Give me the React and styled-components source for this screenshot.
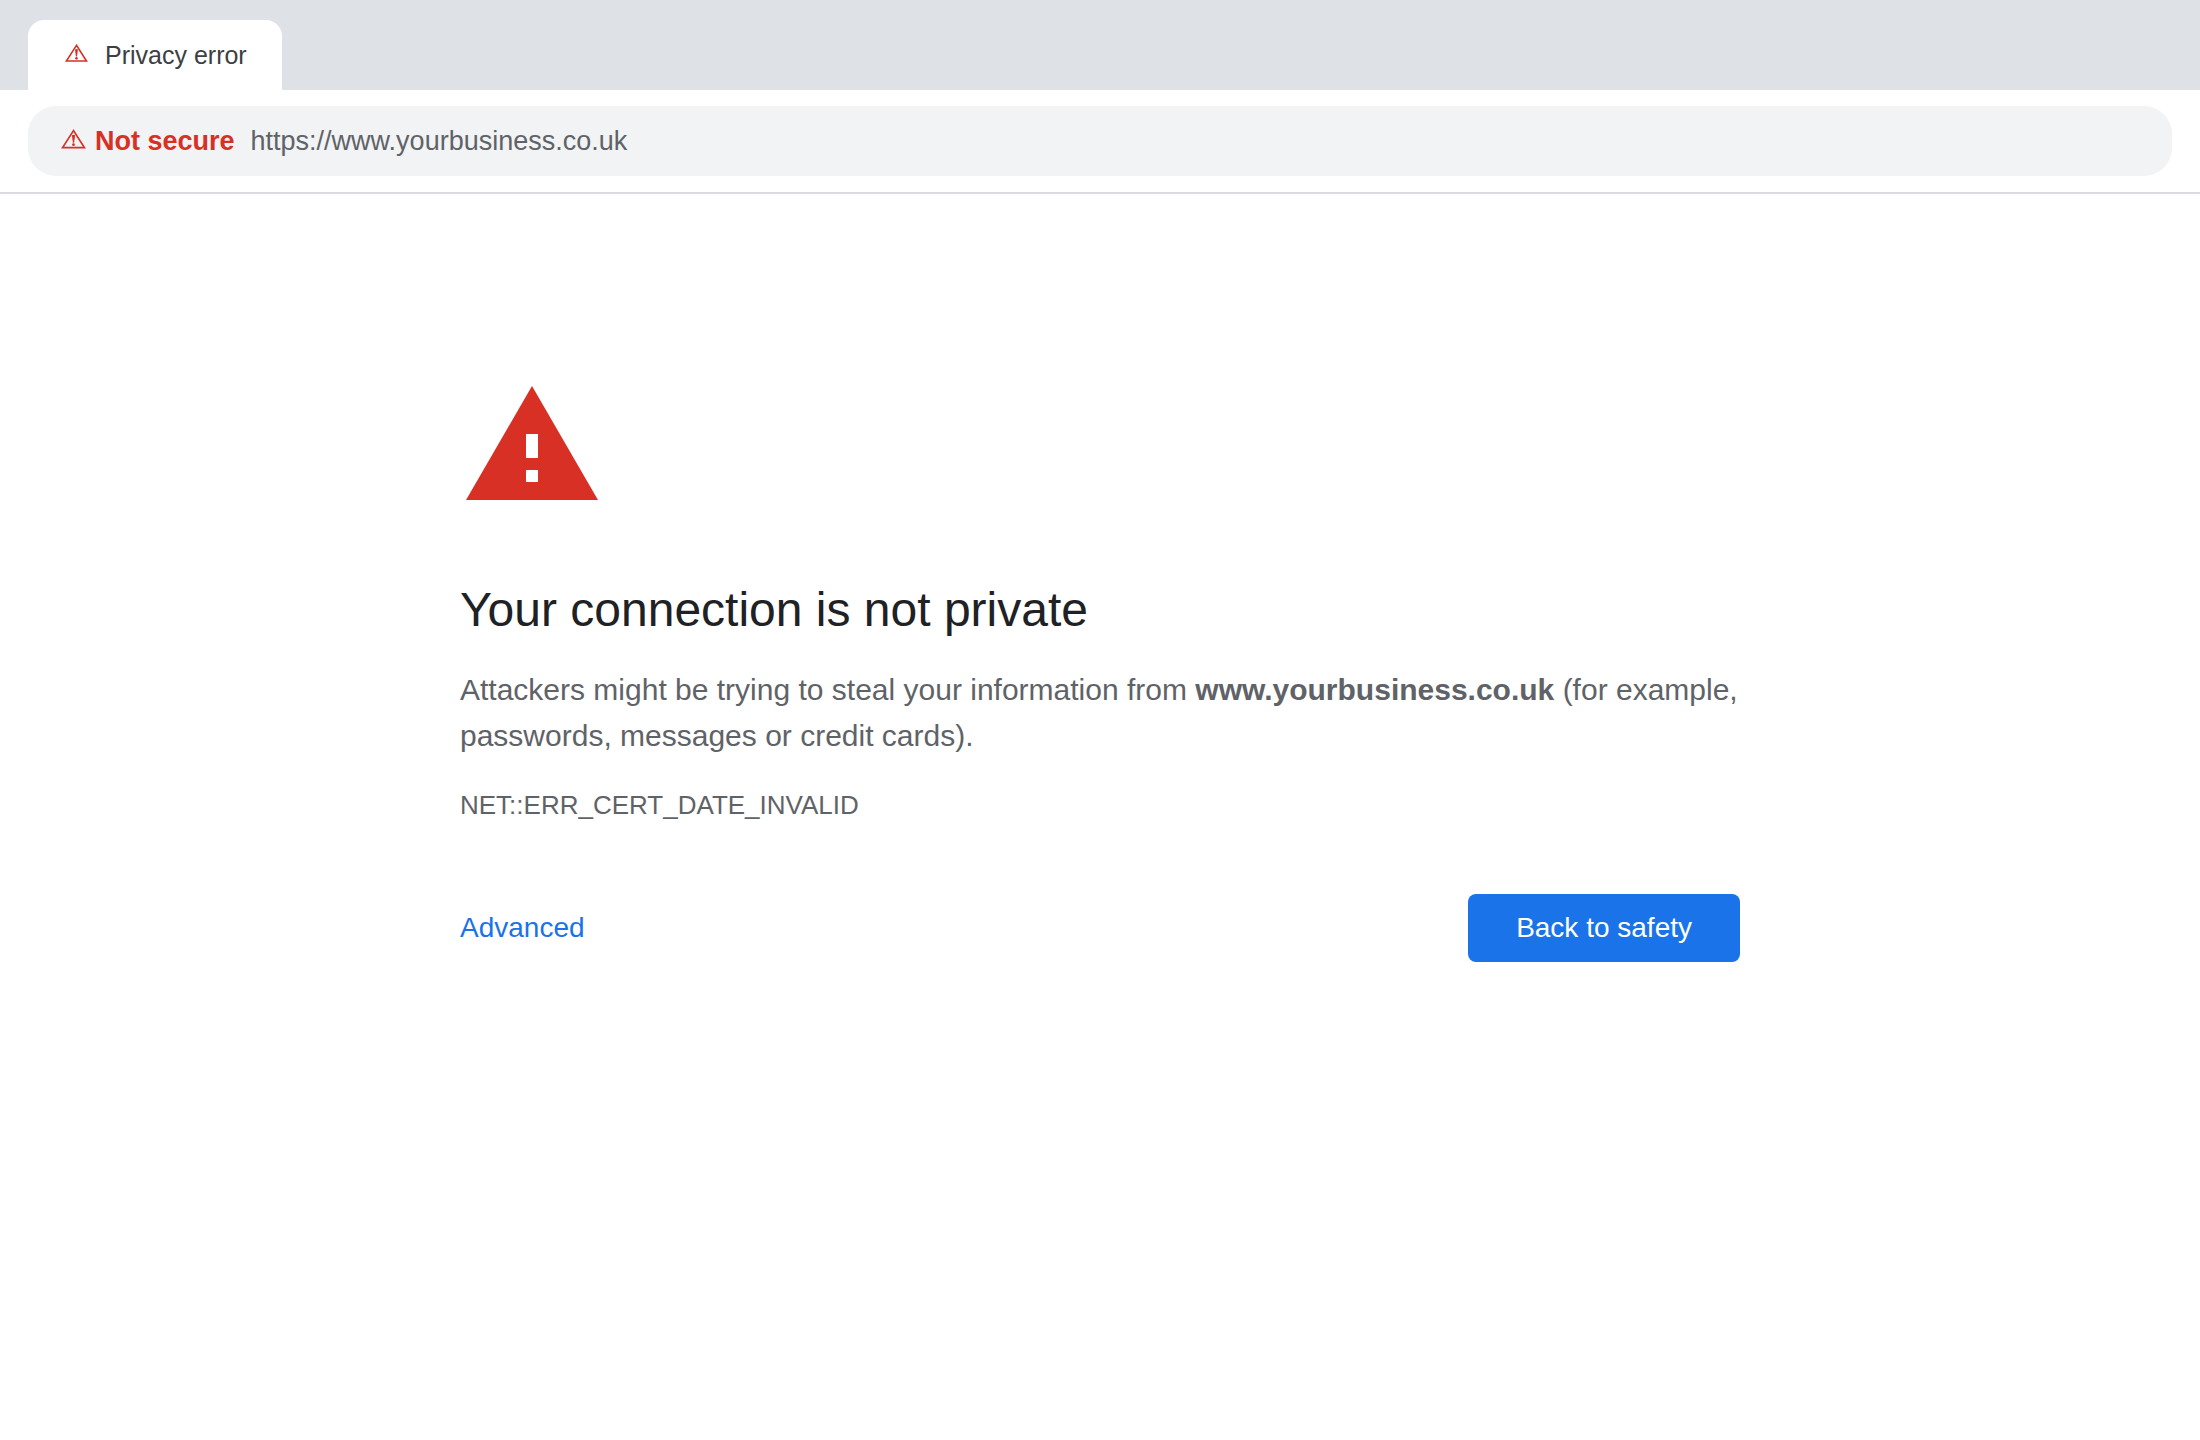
import React from "react";
import styled, { createGlobalStyle } from "styled-components";

const GlobalStyle = createGlobalStyle`
  body {
    margin: 0;
    background-color: #fff;
    font-family: "Liberation Sans", Arial, sans-serif;
  }
`

const TabStrip = styled.header`
  display: flex;
  align-items: flex-end;
  height: 90px;
  padding: 0 28px;
  box-sizing: border-box;
  background-color: #dee1e6;
`

const Tab = styled.div`
  display: flex;
  align-items: center;
  gap: 17px;
  height: 70px;
  padding: 0 35px 0 36px;
  border-radius: 16px 16px 0 0;
  background-color: #fff;
  color: #3c4043;
  font-size: 25px;
`

const Toolbar = styled.div`
  padding: 16px 28px;
  border-bottom: 2px solid #dadce0;
`

const AddressBar = styled.div`
  display: flex;
  align-items: center;
  height: 70px;
  padding: 0 32px;
  border-radius: 28px;
  background-color: #f1f3f4;
  font-size: 27px;
`

const NotSecure = styled.label`
  display: flex;
  align-items: center;
  gap: 9px;
  margin-right: 16px;
  color: #d93025;
  font-weight: bold;
  white-space: nowrap;
`

const Url = styled.input`
  flex: 1;
  min-width: 0;
  padding: 0;
  border: none;
  outline: none;
  background: transparent;
  color: #5f6368;
  font-family: inherit;
  font-size: inherit;
`

const SmallIcon = styled.svg`
  width: ${(props) => props.$size}px;
  flex-shrink: 0;
  display: block;
`

const Main = styled.main`
  max-width: 1280px;
  margin: 0 auto;
  padding: 180px 32px 64px;
`

const BigIcon = styled.svg`
  display: block;
  width: 144px;
  height: 144px;
  margin-bottom: 64px;
  fill: #d93025;
`

const Title = styled.h1`
  margin: 0 0 29px;
  color: #202124;
  font-size: 48px;
  font-weight: normal;
  line-height: 56px;
`

const Message = styled.p`
  margin: 0 0 27px;
  color: #5f6368;
  font-size: 30px;
  line-height: 46px;
`

const ErrorCode = styled.p`
  margin: 0 0 70px;
  color: #5f6368;
  font-size: 26px;
  line-height: 38px;
`

const Actions = styled.div`
  display: flex;
  align-items: center;
  justify-content: space-between;
`

const Button = styled.button`
  height: 68px;
  padding: 0 ${(props) => (props.$primary ? 48 : 0)}px;
  border: none;
  border-radius: 8px;
  background-color: ${(props) => (props.$primary ? "#1a73e8" : "transparent")};
  color: ${(props) => (props.$primary ? "#fff" : "#1a73e8")};
  font-family: inherit;
  font-size: 28px;
  cursor: pointer;
`

const WarningIcon = ({ size }) => (
  <SmallIcon $size={size} viewBox="0 0 26 28" aria-hidden="true">
    <path d="M13.5 3.6 2.6 20.6h21.8z" fill="none" stroke="#d93025" strokeWidth="1.7" />
    <path d="M11.9 8.2q1.6-1 3.2 0l-1 7.6h-1.2z" fill="#d93025" />
    <circle cx="13.5" cy="17.7" r="1.4" fill="#d93025" />
  </SmallIcon>
)

const App = () => {
  return (
    <>
      <GlobalStyle />
      <TabStrip>
        <Tab>
          <WarningIcon size={24} />
          <span>Privacy error</span>
        </Tab>
      </TabStrip>
      <Toolbar>
        <AddressBar>
          <NotSecure htmlFor="url">
            <WarningIcon size={26} />
            Not secure
          </NotSecure>
          <Url id="url" type="text" defaultValue="https://www.yourbusiness.co.uk" spellCheck={false} />
        </AddressBar>
      </Toolbar>
      <Main>
        <BigIcon viewBox="0 0 24 24" aria-hidden="true">
          <path d="M1 21h22L12 2 1 21zm12-3h-2v-2h2v2zm0-4h-2v-4h2v4z" />
        </BigIcon>
        <Title>Your connection is not private</Title>
        <Message>
          Attackers might be trying to steal your information from{" "}
          <strong>www.yourbusiness.co.uk</strong> (for example, passwords, messages or credit cards).
        </Message>
        <ErrorCode>NET::ERR_CERT_DATE_INVALID</ErrorCode>
        <Actions>
          <Button type="button">Advanced</Button>
          <Button type="button" $primary>Back to safety</Button>
        </Actions>
      </Main>
    </>
  )
}

export default App
